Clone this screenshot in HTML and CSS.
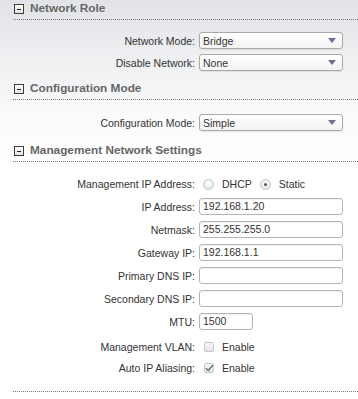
FILE: index.html
```html
<!DOCTYPE html>
<html>
<head>
<meta charset="utf-8">
<link rel="stylesheet" href="styles.css">
</head>
<body>
<div class="page">
  <section class="section">
    <div class="header"><span class="toggle"></span><span class="title">Network Role</span></div>
    <div class="rows rows-a">
      <div class="row"><label class="label">Network Mode:</label><div class="select"><span>Bridge</span><svg class="arrow" width="8" height="5" viewBox="0 0 8 5"><path d="M0 0H8L4 5Z" fill="#6a7196"/></svg></div></div>
      <div class="row row-tight"><label class="label">Disable Network:</label><div class="select"><span>None</span><svg class="arrow" width="8" height="5" viewBox="0 0 8 5"><path d="M0 0H8L4 5Z" fill="#6a7196"/></svg></div></div>
    </div>
  </section>
  <section class="section">
    <div class="header"><span class="toggle"></span><span class="title">Configuration Mode</span></div>
    <div class="rows rows-b">
      <div class="row"><label class="label">Configuration Mode:</label><div class="select"><span>Simple</span><svg class="arrow" width="8" height="5" viewBox="0 0 8 5"><path d="M0 0H8L4 5Z" fill="#6a7196"/></svg></div></div>
    </div>
  </section>
  <section class="section section-last">
    <div class="header"><span class="toggle"></span><span class="title">Management Network Settings</span></div>
    <div class="rows rows-c">
      <div class="row row-radio"><label class="label">Management IP Address:</label>
        <div class="choices">
          <span class="radio"></span><span class="opt">DHCP</span>
          <span class="radio on"></span><span class="opt">Static</span>
        </div>
      </div>
      <div class="row"><label class="label">IP Address:</label><div class="input">192.168.1.20</div></div>
      <div class="row"><label class="label">Netmask:</label><div class="input">255.255.255.0</div></div>
      <div class="row"><label class="label">Gateway IP:</label><div class="input">192.168.1.1</div></div>
      <div class="row"><label class="label">Primary DNS IP:</label><div class="input"></div></div>
      <div class="row"><label class="label">Secondary DNS IP:</label><div class="input"></div></div>
      <div class="row"><label class="label">MTU:</label><div class="input short">1500</div></div>
      <div class="row row-check"><label class="label">Management VLAN:</label><div class="choices"><span class="check"></span><span class="opt">Enable</span></div></div>
      <div class="row row-check"><label class="label">Auto IP Aliasing:</label><div class="choices"><span class="check"><svg width="9" height="8" viewBox="0 0 9 8"><path d="M1 4.2L3.3 6.5L8 1" fill="none" stroke="#6b6b6b" stroke-width="1.4"/></svg></span><span class="opt">Enable</span></div></div>
    </div>
  </section>
</div>
</body>
</html>
```

FILE: styles.css
```css
html, body {
  margin: 0;
  padding: 0;
}
body {
  background: linear-gradient(to bottom, #e1e3e7 0px, #eef0f2 60px, #fbfbfc 120px, #ffffff 170px);
  font-family: "Liberation Sans", Arial, sans-serif;
  font-size: 10.5px;
  color: #333;
  width: 358px;
  height: 399px;
  overflow: hidden;
}
.page {
  padding-left: 13px;
}
.section-last {
  border-bottom: 1px dotted #7a7a7a;
}
.header {
  height: 19px;
  border-bottom: 1px dotted #7a7a7a;
  display: flex;
  align-items: flex-start;
  box-sizing: content-box;
}
.toggle {
  width: 8px;
  height: 8px;
  margin: 4px 0 0 1px;
  border: 1px solid #3c3c3c;
  background: linear-gradient(#ffffff, #e4e4e4);
  position: relative;
  flex: none;
}
.toggle::after {
  content: "";
  position: absolute;
  left: 2px;
  top: 3.5px;
  width: 4px;
  height: 1px;
  background: #222;
}
.title {
  margin-left: 6px;
  font-size: 11.8px;
  font-weight: bold;
  color: #666;
  line-height: 17px;
}
.rows {
  display: flex;
  flex-direction: column;
}
.rows-a { padding: 12px 0 9px; }
.rows-b { padding: 14px 0 11px; }
.rows-c { padding: 14px 0 13px; }
.row {
  display: grid;
  grid-template-columns: 182px auto;
  column-gap: 4px;
  align-items: center;
  margin-top: 6px;
}
.row:first-child { margin-top: 0; }
.row-tight { margin-top: 5px; }
.row-radio { height: 16px; }
.row-check { height: 21px; }
.row-check + .row-check { margin-top: 0; }
.label {
  text-align: right;
  white-space: nowrap;
  color: #333;
}
.select {
  width: 144px;
  height: 17px;
  box-sizing: border-box;
  border: 1px solid #a9a9a9;
  border-radius: 3px;
  background: linear-gradient(#ffffff, #f3f3f3);
  box-shadow: 0 1px 1px rgba(0,0,0,0.08);
  display: flex;
  align-items: center;
  justify-content: space-between;
  padding: 0 6px 0 3px;
  color: #333;
}
.arrow { display: block; }
.input {
  width: 144px;
  height: 17px;
  box-sizing: border-box;
  border: 1px solid #b5b5b5;
  border-radius: 3px;
  background: #fff;
  box-shadow: inset 0 1px 1px rgba(0,0,0,0.06);
  padding: 0 3px;
  line-height: 15px;
  color: #333;
}
.input.short { width: 54px; }
.choices {
  display: flex;
  align-items: center;
}
.radio {
  width: 11px;
  height: 11px;
  box-sizing: border-box;
  border-radius: 50%;
  border: 1px solid #c4c4c4;
  background: radial-gradient(circle at 50% 35%, #ffffff 0%, #e6e6e6 80%);
  margin-left: 4px;
  margin-right: 8px;
  position: relative;
  flex: none;
}
.radio.on::after {
  content: "";
  position: absolute;
  left: 3px;
  top: 3px;
  width: 3px;
  height: 3px;
  border-radius: 50%;
  background: #555;
}
.opt + .radio { margin-left: 8px; }
.check {
  width: 10px;
  height: 10px;
  box-sizing: border-box;
  border: 1px solid #c6c6c6;
  border-radius: 2px;
  background: linear-gradient(#f8f8f8, #e3e3e3);
  margin-left: 5px;
  margin-right: 8px;
  position: relative;
  flex: none;
}
.check svg {
  position: absolute;
  left: 0;
  top: 0;
}
.opt { color: #333; }
```
